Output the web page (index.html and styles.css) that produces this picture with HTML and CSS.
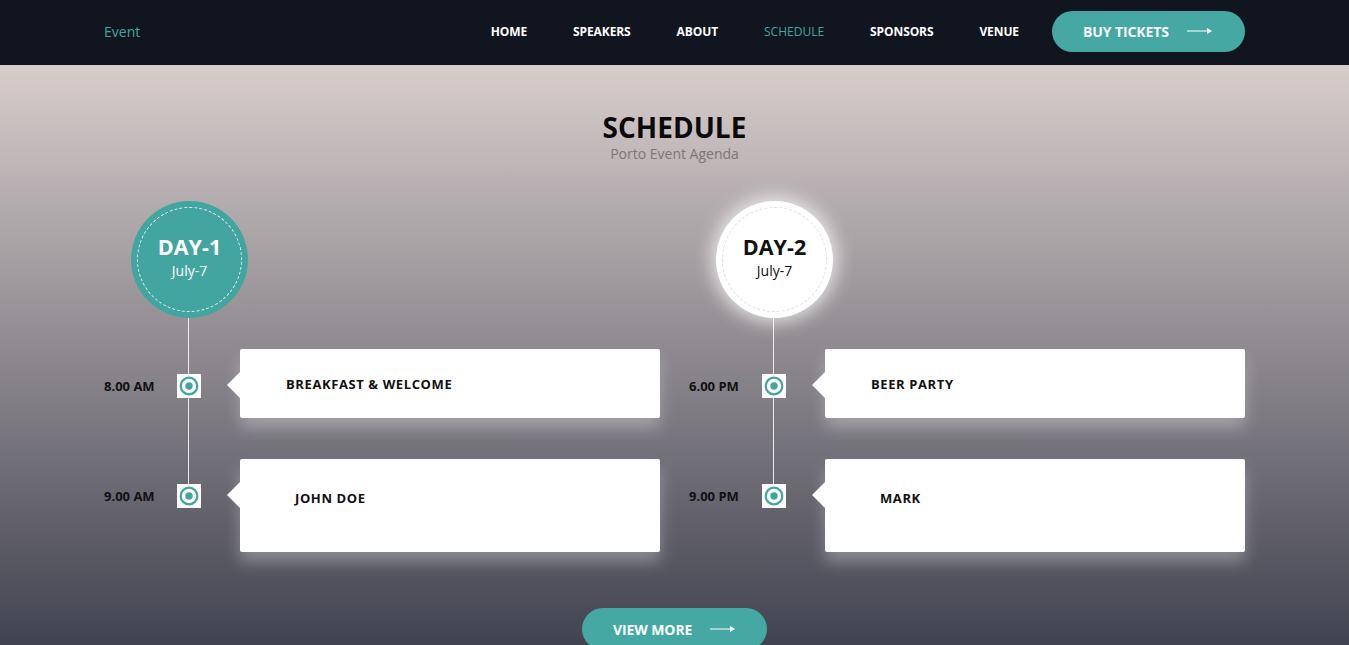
FILE: index.html
```html
<!DOCTYPE html>
<html lang="en">
<head>
<meta charset="utf-8">
<title>Event - Schedule</title>
<link rel="stylesheet" href="styles.css">
</head>
<body>
<header class="topbar">
  <div class="container topbar-inner">
    <a class="brand" href="#">Event</a>
    <nav class="nav">
      <a href="#" class="nav-link">HOME</a>
      <a href="#" class="nav-link">SPEAKERS</a>
      <a href="#" class="nav-link">ABOUT</a>
      <a href="#" class="nav-link active">SCHEDULE</a>
      <a href="#" class="nav-link">SPONSORS</a>
      <a href="#" class="nav-link">VENUE</a>
      <a href="#" class="btn btn-tickets">BUY TICKETS
        <svg class="arrow" width="25" height="8" viewBox="0 0 25 8"><line x1="0" y1="4" x2="22" y2="4" stroke="#fff" stroke-width="1"/><path d="M20 1 L25 4 L20 7 Z" fill="#fff"/></svg>
      </a>
    </nav>
  </div>
</header>

<section class="schedule">
  <div class="container">
    <div class="section-title">
      <h2>SCHEDULE</h2>
      <p>Porto Event Agenda</p>
    </div>

    <div class="days">
      <div class="day">
        <div class="day-circle teal">
          <div class="day-inner">
            <span class="day-name">DAY-1</span>
            <span class="day-date">July-7</span>
          </div>
        </div>
        <div class="events">
          <div class="event">
            <div class="time">8.00 AM</div>
            <div class="marker"><svg width="20" height="20" viewBox="0 0 20 20"><circle cx="10" cy="10" r="8.3" fill="none" stroke="#43a5a0" stroke-width="2.2"/><circle cx="10" cy="10" r="3.7" fill="#43a5a0"/></svg></div>
            <div class="card card-short"><h4>BREAKFAST &amp; WELCOME</h4></div>
          </div>
          <div class="event">
            <div class="time">9.00 AM</div>
            <div class="marker"><svg width="20" height="20" viewBox="0 0 20 20"><circle cx="10" cy="10" r="8.3" fill="none" stroke="#43a5a0" stroke-width="2.2"/><circle cx="10" cy="10" r="3.7" fill="#43a5a0"/></svg></div>
            <div class="card card-tall"><h4>JOHN DOE</h4></div>
          </div>
        </div>
      </div>

      <div class="day">
        <div class="day-circle light">
          <div class="day-inner">
            <span class="day-name">DAY-2</span>
            <span class="day-date">July-7</span>
          </div>
        </div>
        <div class="events">
          <div class="event">
            <div class="time">6.00 PM</div>
            <div class="marker"><svg width="20" height="20" viewBox="0 0 20 20"><circle cx="10" cy="10" r="8.3" fill="none" stroke="#43a5a0" stroke-width="2.2"/><circle cx="10" cy="10" r="3.7" fill="#43a5a0"/></svg></div>
            <div class="card card-short"><h4>BEER PARTY</h4></div>
          </div>
          <div class="event">
            <div class="time">9.00 PM</div>
            <div class="marker"><svg width="20" height="20" viewBox="0 0 20 20"><circle cx="10" cy="10" r="8.3" fill="none" stroke="#43a5a0" stroke-width="2.2"/><circle cx="10" cy="10" r="3.7" fill="#43a5a0"/></svg></div>
            <div class="card card-tall"><h4>MARK</h4></div>
          </div>
        </div>
      </div>
    </div>

    <div class="more">
      <a href="#" class="btn btn-more">VIEW MORE
        <svg class="arrow" width="25" height="8" viewBox="0 0 25 8"><line x1="0" y1="4" x2="22" y2="4" stroke="#fff" stroke-width="1"/><path d="M20 1 L25 4 L20 7 Z" fill="#fff"/></svg>
      </a>
    </div>
  </div>
</section>
</body>
</html>
```

FILE: styles.css
```css
* { box-sizing: border-box; }

html, body {
  margin: 0;
  padding: 0;
}

body {
  font-family: "Open Sans", "Liberation Sans", sans-serif;
  background: #3d3f4d;
  overflow: hidden;
}

a { text-decoration: none; }

.container {
  width: 1141px;
  margin: 0 auto;
}

/* Header */
.topbar {
  background: #111520;
  height: 65px;
}

.topbar-inner {
  display: flex;
  align-items: center;
  justify-content: space-between;
  height: 65px;
  padding-bottom: 3px;
}

.brand {
  color: #43a5a0;
  font-size: 14px;
}

.nav {
  display: flex;
  align-items: center;
}

.nav-link {
  color: #fff;
  font-size: 12px;
  font-weight: 700;
  letter-spacing: -0.1px;
  margin-left: 46px;
  white-space: nowrap;
}

.nav-link.active {
  color: #43a5a0;
  font-weight: 400;
  letter-spacing: 0;
}

.btn {
  display: inline-flex;
  align-items: center;
  flex-shrink: 0;
  white-space: nowrap;
  background: #45a8a3;
  color: #fff;
  font-weight: 700;
  font-size: 14px;
  letter-spacing: -0.1px;
  border-radius: 21px;
  height: 41px;
  padding: 0 20px 0 31px;
}

.btn .arrow {
  margin-left: 18px;
  display: block;
  flex-shrink: 0;
}

.btn-tickets {
  width: 193px;
  margin-left: 33px;
}

/* Schedule section */
.schedule {
  background: linear-gradient(to bottom, #d7cdcc 0%, #8a868c 50%, #3c3e4c 100%);
  height: 600px;
  padding-top: 47px;
}

.section-title {
  text-align: center;
}

.section-title h2 {
  margin: 0;
  font-size: 28px;
  font-weight: 700;
  color: #0a0a0a;
  line-height: 30px;
}

.section-title p {
  margin: 4px 0 0;
  font-size: 14px;
  color: #7b7678;
  line-height: 16px;
}

.days {
  display: flex;
  gap: 29px;
  margin-top: 39px;
}

.day {
  width: 556px;
}

.day-circle {
  width: 117px;
  height: 117px;
  border-radius: 50%;
  margin-left: 27px;
  padding: 6px;
}

.day-circle.teal {
  background: #43a5a0;
  color: #fff;
}

.day-circle.light {
  background: #fff;
  color: #111;
  box-shadow: 0 0 18px 4px rgba(255, 255, 255, 0.75);
}

.day-inner {
  width: 100%;
  height: 100%;
  border-radius: 50%;
  border: 1px dashed rgba(255, 255, 255, 0.9);
  display: flex;
  flex-direction: column;
  align-items: center;
  justify-content: center;
  padding-bottom: 4px;
}

.day-circle.light .day-inner {
  border-color: #dedede;
}

.day-name {
  font-size: 21.5px;
  font-weight: 700;
  line-height: 26px;
}

.day-date {
  font-size: 14px;
  line-height: 21px;
}

.events {
  position: relative;
  padding-top: 31px;
}

.events::before {
  content: "";
  position: absolute;
  left: 84px;
  top: 0;
  bottom: 56px;
  width: 1px;
  background: rgba(255, 255, 255, 0.85);
}

.event {
  display: flex;
  align-items: flex-start;
  margin-bottom: 41px;
}

.event:last-child {
  margin-bottom: 0;
}

.time {
  width: 73px;
  margin-top: 25px;
  font-size: 13px;
  font-weight: 700;
  line-height: 24px;
  color: #111;
}

.marker {
  position: relative;
  width: 24px;
  height: 24px;
  margin-top: 25px;
  background: #fff;
  display: flex;
  align-items: center;
  justify-content: center;
}

.marker svg {
  display: block;
}

.card {
  position: relative;
  flex: 1;
  margin-left: 39px;
  background: #fff;
  border-radius: 2px;
  box-shadow: 0 10px 16px rgba(255, 255, 255, 0.3);
}

.card::before {
  content: "";
  position: absolute;
  left: -13px;
  top: 23px;
  border-style: solid;
  border-width: 13px 13px 13px 0;
  border-color: transparent #fff transparent transparent;
}

.card h4 {
  margin: 0;
  font-size: 13px;
  font-weight: 700;
  line-height: 18px;
  color: #111;
  letter-spacing: 0.6px;
}

.card-short {
  height: 69px;
  padding: 26px 20px 0 46px;
}

.card-tall {
  height: 93px;
  padding: 30px 20px 0 55px;
}

.more {
  display: flex;
  justify-content: center;
  margin-top: 56px;
}

.btn-more {
  width: 185px;
  height: 42px;
}
```
